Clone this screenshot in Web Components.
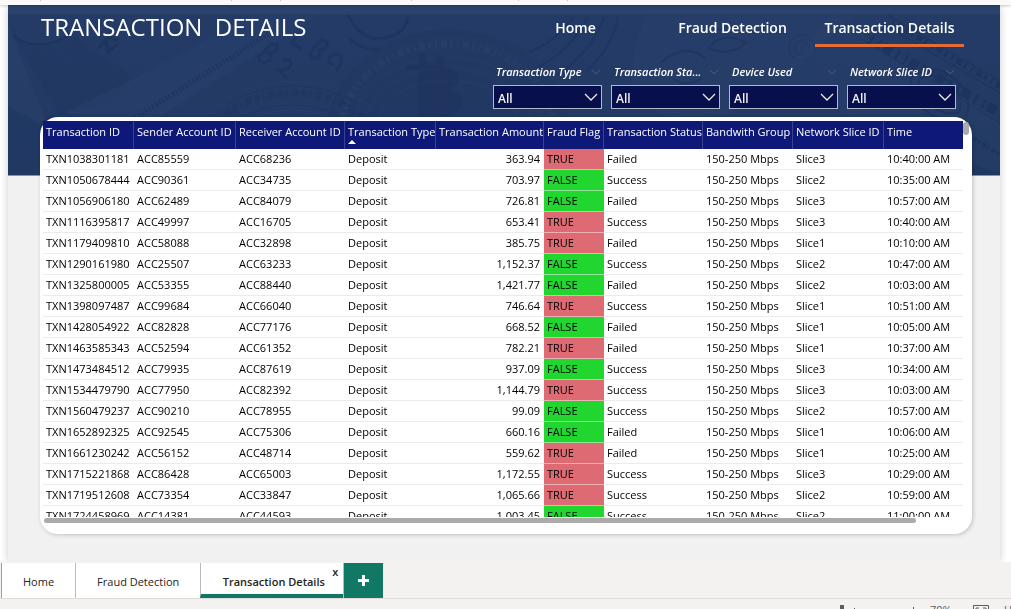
<!DOCTYPE html>
<html lang="en">
<head>
<meta charset="utf-8">
<title>Transaction Details</title>
<style>
html, body { margin: 0; height: 100%; }
body { font-family: "Open Sans", "Noto Sans", sans-serif; font-size: 11px; background: #fff; overflow: hidden; }
</style>
</head>
<body>
<report-app></report-app>
<script>
const define = (name, html, setup) => {
  const template = document.createElement('template');
  template.innerHTML = html;
  customElements.define(name, class extends HTMLElement {
    connectedCallback() {
      if (this.shadowRoot) return;
      const root = this.attachShadow({ mode: 'open' });
      root.append(template.content.cloneNode(true));
      if (setup) setup(root, this);
    }
  });
};

/* Banknotes and coins behind the banner */
define('banner-art', `
<style>
:host { display: block; overflow: hidden; background: linear-gradient(#2b426c 0 9px, #243c68 10px, #233b66 60%, #1f3861); border-bottom: 1px solid #8492b4; box-sizing: border-box; }
svg { display: block; width: 100%; height: 100%; }
</style>
<svg viewBox="0 0 992 170" preserveAspectRatio="xMidYMin slice" aria-hidden="true">
  <defs>
    <pattern id="lines" width="3" height="3" patternUnits="userSpaceOnUse" patternTransform="rotate(-12)"><path d="M0 1H3" stroke="#1b3158" stroke-width="1" opacity=".6"/></pattern>
  </defs>
  <rect y="9" width="992" height="161" fill="#20365f" opacity=".25"/>
  <g opacity=".75">
  <path d="M0 20 L60 170 H0Z" fill="#2d456f" opacity=".55"/>
  <path d="M5 30 C20 45 50 40 62 28 L125 72 Q110 105 50 108Z" fill="url(#lines)"/>
  <path d="M5 30 C20 45 50 40 62 28" fill="none" stroke="#1a3057" stroke-width="2" opacity=".7"/>
  <path d="M48 112 L125 74 L245 10 H310 L90 152 L60 170Z" fill="#2b446f" opacity=".5"/>
  <path d="M100 130 L262 28" stroke="#1a2f56" stroke-width="5" stroke-dasharray="2 2" opacity=".55"/>
  <path d="M0 100 L30 118 L52 106 L74 112 L40 170 H0Z" fill="#1b345f" opacity=".5"/>
  <path d="M90 44 l8 -9 l2 12 l9 -8 M100 32 l10 3" fill="none" stroke="#182d55" stroke-width="3" opacity=".6"/>
  <g fill="none" stroke="#182d54" stroke-width="3" opacity=".45">
    <path d="M250 53 l12 -14 q8 -2 7 4 q-2 6 -8 5 q5 4 -1 8 q-6 4 -10 -3M275 55 q8 -2 8 4 q-2 7 -12 6 l8 9"/>
    <path d="M292 28 l-8 10 l10 6M302 48 l11 -13 q9 1 5 8 q-4 4 -8 1 q5 6 -1 9 q-5 1 -7 -5M322 52 q7 -6 11 0 q2 8 -5 14 M322 52 q-3 8 4 7"/>
  </g>
  <g fill="none" stroke="#3b5178" opacity=".3">
    <ellipse cx="285" cy="162" rx="108" ry="86"/>
    <ellipse cx="285" cy="162" rx="103" ry="81" stroke="#1a3059"/>
    <ellipse cx="285" cy="166" rx="86" ry="66" stroke="#1a3059"/>
    <ellipse cx="285" cy="166" rx="81" ry="61"/>
    <ellipse cx="285" cy="166" rx="75" ry="55"/>
    <ellipse cx="285" cy="166" rx="69" ry="49" stroke="#1a3059"/>
    <ellipse cx="285" cy="166" rx="62" ry="42"/>
    <ellipse cx="285" cy="162" rx="95" ry="74" stroke="#1a3059" stroke-width="7" stroke-dasharray="5 3 2 4 7 3"/>
  </g>
  <g fill="none" stroke="#40466c" opacity=".3">
    <ellipse cx="440" cy="125" rx="122" ry="102" fill="#22355f"/>
    <ellipse cx="440" cy="125" rx="117" ry="97" stroke="#1a3059"/>
    <ellipse cx="440" cy="127" rx="96" ry="75"/>
    <ellipse cx="440" cy="127" rx="91" ry="70" stroke="#1a3059"/>
    <ellipse cx="440" cy="127" rx="85" ry="64"/>
    <ellipse cx="440" cy="127" rx="79" ry="58" stroke="#1a3059"/>
    <ellipse cx="440" cy="127" rx="73" ry="52"/>
    <ellipse cx="440" cy="125" rx="106" ry="86" stroke="#42466b" stroke-width="7" stroke-dasharray="2 4 6 3 3 4"/>
  </g>
  <path d="M398 60 h14 l-3 -12 h8 l3 12 h10 l-3 -10 h8 l3 12 q22 6 6 22 q22 12 0 26 l-34 5 v-50 h-12z" fill="#1b2e57" opacity=".35"/>
  <path d="M340 10 q15 30 40 22 q18 -4 20 -20 M342 34 q12 12 30 10" fill="none" stroke="#19305a" stroke-width="3" opacity=".6"/>
  <path d="M640 10 Q618 45 626 95 L660 112 L720 110 L770 80 L812 40 L850 10Z" fill="#314a73" opacity=".3"/>
  <g fill="none" stroke="#1b315b" opacity=".6">
    <path d="M565 12 Q550 35 520 48 M580 12 Q562 46 530 62 M596 12 Q586 44 550 70 M610 12 Q604 44 578 66" stroke-width="2"/>
    <path d="M700 43 Q716 25 738 38 Q722 52 700 43M706 26 Q730 16 748 29M652 58 Q680 36 698 54 M665 74 q15 9 29 -1" stroke-width="2"/>
    <circle cx="794" cy="43" r="13"/><circle cx="794" cy="43" r="7"/>
  </g>
  <path d="M824 10 L992 115 V170 L770 82 Q785 55 824 10Z" fill="#2c446e" opacity=".4"/>
  <g fill="none" stroke="#182d56" opacity=".55">
    <path d="M880 10 L992 76 M874 18 L992 88 M850 32 L992 118"/>
    <path d="M884 17 L992 81" stroke-width="6" stroke-dasharray="2 4 6 3 3 5"/>
    <path d="M862 34 L992 108" stroke-width="10" stroke-dasharray="3 7 2 4 9 5"/>
    <path d="M905 70 q20 -14 42 4 q22 22 8 42 q-28 2 -43 -16 q-15 -16 -7 -30M912 74 q16 -8 30 4 q16 16 8 30 q-20 2 -32 -11 q-12 -12 -6 -23" stroke-width="2"/>
    <path d="M952 124 L992 150" stroke-width="4" stroke-dasharray="2 3 4 2"/>
  </g>
  </g>
</svg>`);

define('nav-link', `
<style>
:host { display: block; width: 149px; }
a { display: block; box-sizing: border-box; height: 42px; padding-top: 13px; line-height: 20px; border-bottom: 3px solid transparent; text-align: center; font-size: 14px; font-weight: 600; color: #fff; text-decoration: none; white-space: nowrap; }
:host([current]) a { border-color: #e66c37; }
</style>
<a href="#"><slot></slot></a>`);

define('filter-slicer', `
<style>
:host { display: block; width: 109px; }
.head { display: flex; align-items: center; justify-content: space-between; padding: 0 1px 0 3px; height: 16px; margin-bottom: 5px; }
label { font-size: 11px; line-height: 16px; font-style: italic; font-weight: 600; color: #fff; white-space: nowrap; }
.box { display: grid; align-items: center; }
select, .box svg { grid-area: 1 / 1; }
select { appearance: none; box-sizing: border-box; width: 100%; height: 24px; margin: 0; padding: 2px 4px 0; border: 1px solid #b4b8cb; border-radius: 0; background: #080f4d; color: #f3f2f1; font: 600 12px "Open Sans", sans-serif; }
.box svg { justify-self: end; margin-right: 4px; pointer-events: none; }
svg { display: block; fill: none; }
</style>
<div class="head"><label for="value"></label><svg width="10" height="6" stroke="#515a70"><path d="M1 1l4 4l4-4"/></svg></div>
<div class="box"><select id="value"><option>All</option></select><svg width="14" height="8" stroke="#eee" stroke-width="1.3"><path d="M1 1l6 6l6-6"/></svg></div>`,
(root, host) => { root.querySelector('label').textContent = host.getAttribute('label'); });

define('transaction-table', `
<style>
:host { display: flex; flex-direction: column; box-sizing: border-box; min-height: 0; padding: 4px 3px 11px; background: #fff; border-radius: 18px; box-shadow: 1px 1px 4px #0003; }
.main { flex: 1; min-height: 0; display: flex; }
.view { flex: 1; min-width: 0; overflow: hidden; }
table { width: 100%; table-layout: fixed; border-collapse: separate; border-spacing: 0; font-size: 11px; line-height: 16px; color: #000; }
th, td { box-sizing: border-box; padding: 0 4px 0 3px; text-align: left; white-space: nowrap; }
th { height: 28px; padding: 3px 0 0 3px; background: #0e1878; color: #fff; font-weight: 400; vertical-align: top; border-right: 1px solid #3a438f; }
th:last-child { border-right: 0; }
td { height: 21px; border-bottom: 1px solid #ebebeb; }
.amount { text-align: right; }
th.amount { padding-right: 2px; }
.true { background: #de6a73; border-bottom-color: #ecb0b5; }
.false { background: #21d62f; border-bottom-color: #90e397; }
.arrow { display: block; width: 0; border: 4px solid transparent; border-top: 0; border-bottom-color: #fff; }
.v { width: 6px; padding-top: 1px; }
.v i { display: block; height: 13px; border-radius: 3px; background: #adabaa; }
.h { height: 6px; padding: 0 53px 0 1px; }
.h i { display: block; height: 5px; margin-top: 1px; border-radius: 3px; background: #adabaa; }
</style>
<div class="main">
<div class="view"><table>
<colgroup></colgroup><thead><tr></tr></thead><tbody></tbody>
</table></div>
<div class="v"><i></i></div>
</div>
<div class="h"><i></i></div>`,
root => {
  const columns = [['Transaction ID', 91], ['Sender Account ID', 102], ['Receiver Account ID', 109], ['Transaction Type', 91], ['Transaction Amount', 108], ['Fraud Flag', 60], ['Transaction Status', 99], ['Bandwith Group', 90], ['Network Slice ID', 91], ['Time', 79]];
  const rows = `1038301181 85559 68236 363.94 T F 3 10:40
1050678444 90361 34735 703.97 F S 2 10:35
1056906180 62489 84079 726.81 F F 3 10:57
1116395817 49997 16705 653.41 T S 3 10:40
1179409810 58088 32898 385.75 T F 1 10:10
1290161980 25507 63233 1,152.37 F S 2 10:47
1325800005 53355 88440 1,421.77 F F 2 10:03
1398097487 99684 66040 746.64 T S 1 10:51
1428054922 82828 77176 668.52 F F 1 10:05
1463585343 52594 61352 782.21 T F 1 10:37
1473484512 79935 87619 937.09 F S 3 10:34
1534479790 77950 82392 1,144.79 T S 3 10:03
1560479237 90210 78955 99.09 F S 2 10:57
1652892325 92545 75306 660.16 F F 1 10:06
1661230242 56152 48714 559.62 T F 1 10:25
1715221868 86428 65003 1,172.55 T S 3 10:29
1719512608 73354 33847 1,065.66 T S 2 10:59
1724458969 14381 44593 1,003.45 F S 2 11:00`.split('\n').map(line => line.split(' '));
  root.querySelector('colgroup').innerHTML = columns.map(c => `<col style="width:${c[1]}px">`).join('');
  root.querySelector('thead tr').innerHTML = columns.map(([name]) =>
    `<th scope="col"${name.endsWith('Amount') ? ' class="amount"' : ''}>${name}${name.endsWith('Type') ? '<span class="arrow"></span>' : ''}</th>`).join('');
  root.querySelector('tbody').innerHTML = rows.map(([id, from, to, amount, flag, status, slice, time]) =>
    `<tr><td>TXN${id}</td><td>ACC${from}</td><td>ACC${to}</td><td>Deposit</td><td class="amount">${amount}</td>` +
    (flag === 'T' ? '<td class="true">TRUE</td>' : '<td class="false">FALSE</td>') +
    `<td>${status === 'S' ? 'Success' : 'Failed'}</td><td>150-250 Mbps</td><td>Slice${slice}</td><td>${time}:00 AM</td></tr>`).join('');
});

define('report-page', `
<style>
:host { display: flex; flex-direction: column; position: relative; min-height: 0; margin: 0 11px 0 8px; background: #f1f1f1; box-shadow: 0 0 8px #0003; }
banner-art { position: absolute; inset: 0 0 auto; height: 171px; }
header, .filters, transaction-table { position: relative; }
header { display: flex; justify-content: space-between; padding: 0 36px 0 33px; }
h1 { margin: 0; padding-top: 5px; font-size: 24px; line-height: 34px; font-weight: 400; color: #fff; white-space: pre; }
nav { display: flex; gap: 8px; }
.filters { display: flex; justify-content: flex-end; gap: 9px; padding: 17px 44px 8px 0; }
transaction-table { flex: 1; margin: 0 28px 28px 32px; }
</style>
<banner-art></banner-art>
<header><h1>TRANSACTION  DETAILS</h1>
<nav><nav-link>Home</nav-link><nav-link>Fraud Detection</nav-link><nav-link current>Transaction Details</nav-link></nav></header>
<div class="filters">
<filter-slicer label="Transaction Type"></filter-slicer>
<filter-slicer label="Transaction Sta..."></filter-slicer>
<filter-slicer label="Device Used"></filter-slicer>
<filter-slicer label="Network Slice ID"></filter-slicer>
</div>
<transaction-table></transaction-table>`);

define('page-tabs', `
<style>
:host { display: flex; height: 35px; padding: 1px 0 0 1px; background: #f3f2f1; border-bottom: 1px solid #dddcdb; }
button { border: 0; margin: 0; border-left: 1px solid #bdbbb9; background: #fff; color: #252423; font: 11px "Open Sans", sans-serif; white-space: nowrap; padding: 2px 21px 0; }
.home { border-left-color: #a19f9d; }
.active { display: flex; box-sizing: border-box; width: 143px; border-left: 1px solid #bdbbb9; border-bottom: 4px solid #117865; background: #fff; }
.active button { flex: 1; border: 0; padding: 6px 0 0 19px; font-weight: 600; }
.active .close { flex: 0 0 16px; align-self: flex-start; padding: 2px 4px 0; font-size: 11px; line-height: 14px; }
.add { width: 40px; padding: 0; border-color: #bdbbb9; background: #117865; }
.add svg { display: block; margin: 0 auto; }
</style>
<button class="home">Home</button>
<button>Fraud Detection</button>
<div class="active"><button>Transaction Details</button><button class="close" aria-label="Close page">x</button></div>
<button class="add" aria-label="New page"><svg width="11" height="11"><path d="M4 0h3v4h4v3H7v4H4V7H0V4h4z" fill="#fff"/></svg></button>`);

define('status-bar', `
<style>
:host { display: flex; justify-content: flex-end; box-sizing: border-box; height: 10px; padding-top: 6px; overflow: hidden; background: #f3f2f1; color: #605e5c; font-size: 11px; line-height: 10px; }
svg { display: block; flex: none; }
.zoom { margin-left: 15px; width: 43px; }
.update { width: 7px; margin-left: 15px; }
</style>
<svg width="77" height="14"><path d="M2 0h4v14H2zM16 3h1v1h-1z M75 2h1v6h-1z" fill="#605e5c"/></svg>
<span class="zoom">70%</span>
<svg width="16" height="14" fill="none" stroke="#605e5c"><path d="M.5.5h15v12H.5zM3 6V3h3M10 3h3v3"/></svg>
<span class="update">U</span>`);

define('report-app', `
<style>
:host { display: flex; flex-direction: column; height: 100vh; overflow: hidden; background: #fff; }
.ribbon { position: relative; height: 5px; background: #fafafa; box-shadow: 0 1px 3px #0003; z-index: 1; }
.ribbon svg { display: block; }
report-page { flex: 1; }
page-tabs, status-bar { position: relative; }
</style>
<div class="ribbon"><svg width="600" height="1" fill="#c8c6c4"><path d="M40 0h1v1h-1zM231 0h1v1h-1zM280 0h1v1h-1zM411 0h1v1h-1zM518 0h1v1h-1zM567 0h1v1h-1z"/></svg></div>
<report-page></report-page>
<page-tabs></page-tabs>
<status-bar></status-bar>`);
</script>
</body>
</html>
